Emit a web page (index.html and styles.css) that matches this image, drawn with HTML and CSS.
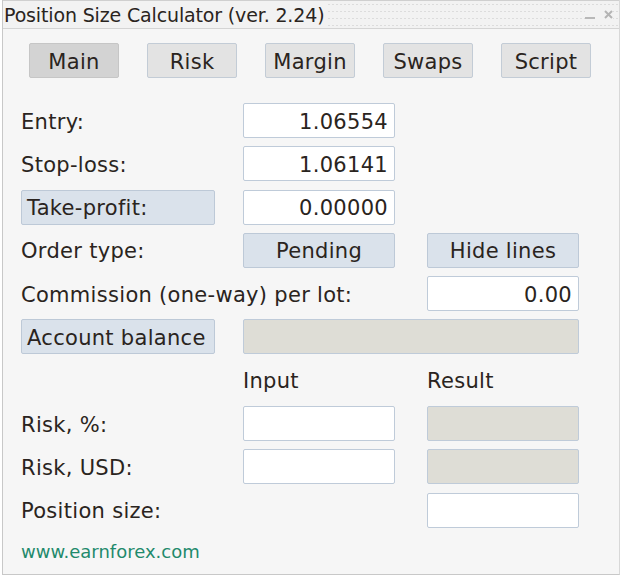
FILE: index.html
```html
<!DOCTYPE html>
<html>
<head>
<meta charset="utf-8">
<link rel="stylesheet" href="styles.css">
</head>
<body>
<div class="window">
  <div class="titlebar">
    <span class="title">Position Size Calculator (ver. 2.24)</span>
    <span class="controls"><span class="min"></span><svg class="close" width="9" height="9" viewBox="0 0 9 9"><path d="M1 1L8 8M8 1L1 8" stroke="#b4b4b4" stroke-width="2"/></svg></span>
  </div>
  <div class="content">
    <div class="tabs">
      <div class="tab active">Main</div>
      <div class="tab">Risk</div>
      <div class="tab">Margin</div>
      <div class="tab">Swaps</div>
      <div class="tab">Script</div>
    </div>
    <div class="grid">
      <div class="label">Entry:</div>
      <div class="field">1.06554</div>
      <div></div>

      <div class="label">Stop-loss:</div>
      <div class="field">1.06141</div>
      <div></div>

      <div class="btn wide">Take-profit:</div>
      <div class="field">0.00000</div>
      <div></div>

      <div class="label">Order type:</div>
      <div class="btn center">Pending</div>
      <div class="btn center">Hide lines</div>

      <div class="label span2">Commission (one-way) per lot:</div>
      <div class="field">0.00</div>

      <div class="btn wide">Account balance</div>
      <div class="field grey span2 full"></div>

      <div></div>
      <div class="label">Input</div>
      <div class="label">Result</div>

      <div class="label">Risk, %:</div>
      <div class="field"></div>
      <div class="field grey"></div>

      <div class="label">Risk, USD:</div>
      <div class="field"></div>
      <div class="field grey"></div>

      <div class="label">Position size:</div>
      <div></div>
      <div class="field"></div>
    </div>
    <div class="footer">www.earnforex.com</div>
  </div>
</div>
</body>
</html>
```

FILE: styles.css
```css
html, body {
  margin: 0;
  padding: 0;
  background: #ffffff;
}
body {
  font-family: "DejaVu Sans", Tahoma, sans-serif;
  color: #2a2420;
}
.window {
  width: 618px;
  height: 575px;
  margin-left: 2px;
  border-left: 1px solid #c8c8c8;
  border-right: 1px solid #d8d8d8;
  border-bottom: 1px solid #c8c8c8;
  background: #f6f6f6;
  box-sizing: border-box;
}
.titlebar {
  height: 29px;
  border-top: 1px solid #cfcfcf;
  border-bottom: 1px solid #d4d4d4;
  background-color: #f2f2f2;
  background-image: radial-gradient(circle, #dcdcdc 0.6px, transparent 0.9px);
  background-size: 4px 7px;
  box-sizing: border-box;
  display: flex;
  align-items: center;
  justify-content: space-between;
  padding: 0 6px 0 1px;
}
.title {
  font-size: 19px;
  letter-spacing: -0.15px;
  background: #f2f2f2;
  padding-right: 4px;
  line-height: 26px;
}
.controls {
  display: flex;
  align-items: center;
  gap: 9px;
  background: #f2f2f2;
}
.min {
  width: 10px;
  height: 2px;
  background: #b8b8b8;
  margin-top: 6px;
}
.content {
  padding: 14px 0 0 15px;
}
.tabs {
  display: flex;
  gap: 28px;
  padding-left: 11px;
  margin-bottom: 25px;
}
.tab {
  width: 90px;
  height: 35px;
  box-sizing: border-box;
  border: 1px solid #c3ccd6;
  border-radius: 2px;
  background: #e3e3e3;
  font-size: 21px;
  letter-spacing: 0.3px;
  display: flex;
  align-items: center;
  justify-content: center;
  padding-top: 2px;
}
.tab.active {
  background: #d3d3d3;
  border-color: #c6c6c6;
}
.grid {
  display: grid;
  grid-template-columns: 222px 184px 152px;
  grid-auto-rows: 35px;
  row-gap: 8.3px;
  padding-left: 3px;
}
.label, .field, .btn {
  font-size: 21px;
  letter-spacing: 0.3px;
  padding-top: 2px;
}
.label {
  display: flex;
  align-items: center;
  white-space: nowrap;
  box-sizing: border-box;
}
.span2 {
  grid-column: span 2;
}
.field {
  width: 152px;
  box-sizing: border-box;
  background: #ffffff;
  border: 1px solid #bfcbd9;
  border-radius: 2px;
  display: flex;
  align-items: center;
  justify-content: flex-end;
  padding-right: 6px;
}
.field.grey {
  background: #deddd6;
}
.field.full {
  width: 336px;
}
.btn {
  width: 152px;
  box-sizing: border-box;
  background: #dae2eb;
  border: 1px solid #bdc9d7;
  border-radius: 2px;
  display: flex;
  align-items: center;
  padding-left: 5px;
  white-space: nowrap;
}
.btn.wide {
  width: 194px;
}
.btn.center {
  justify-content: center;
  padding-left: 0;
}
.footer {
  margin: 13px 0 0 3px;
  font-size: 18px;
  color: #1f8a6c;
}
```
